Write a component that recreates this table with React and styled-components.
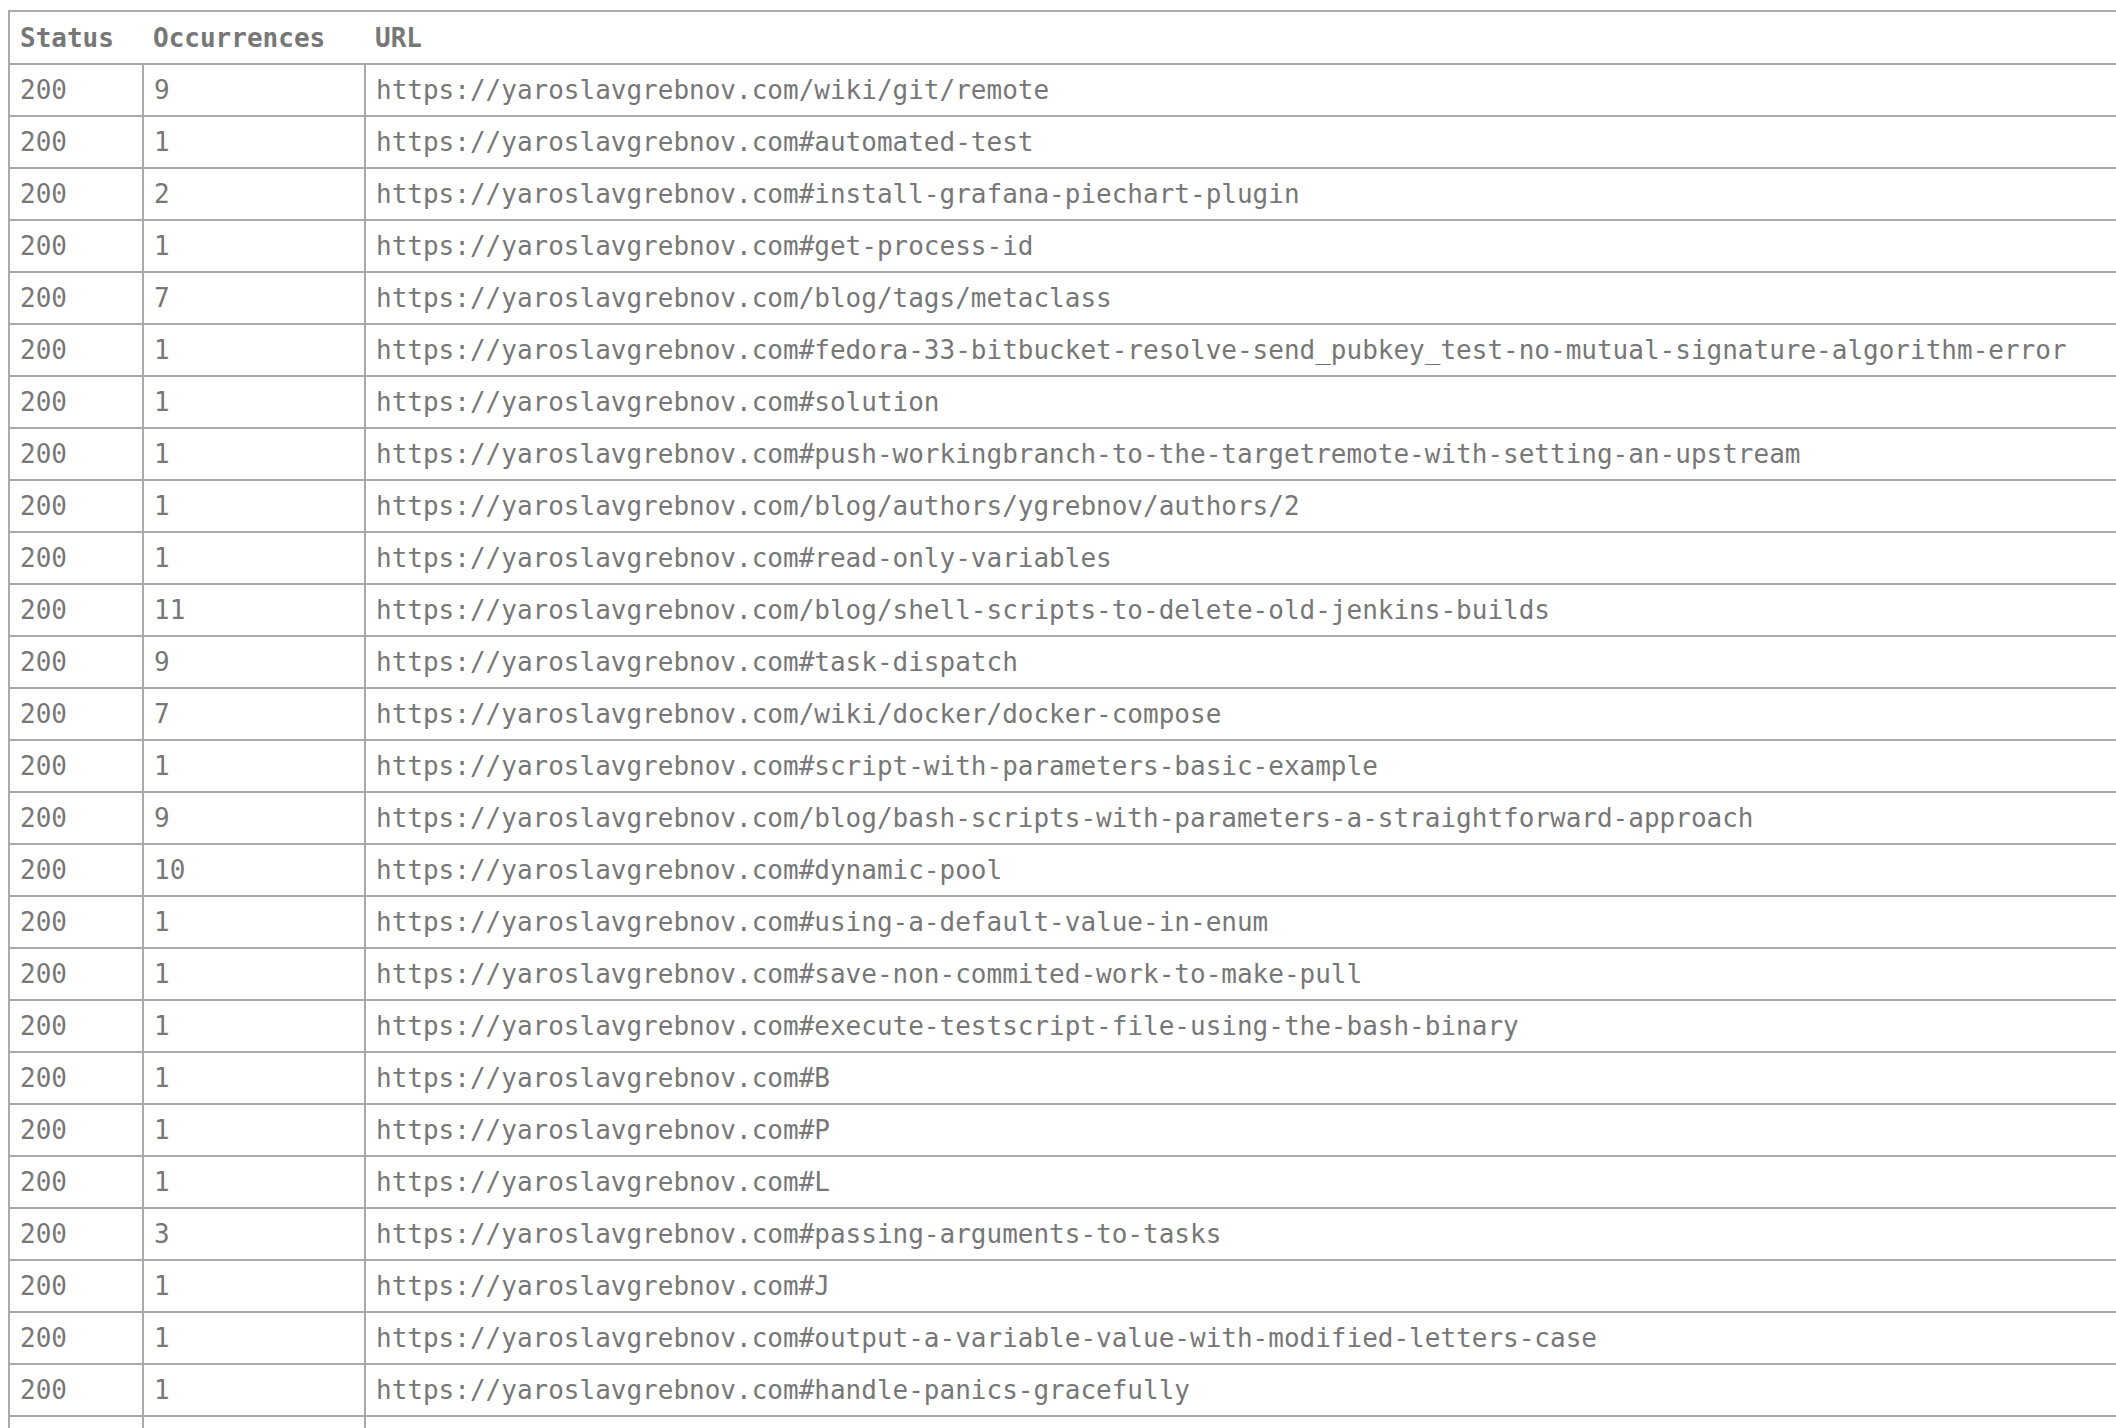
import styled, { createGlobalStyle } from "styled-components";

const rows = [
  ["200", "9", "https://yaroslavgrebnov.com/wiki/git/remote"],
  ["200", "1", "https://yaroslavgrebnov.com#automated-test"],
  ["200", "2", "https://yaroslavgrebnov.com#install-grafana-piechart-plugin"],
  ["200", "1", "https://yaroslavgrebnov.com#get-process-id"],
  ["200", "7", "https://yaroslavgrebnov.com/blog/tags/metaclass"],
  ["200", "1", "https://yaroslavgrebnov.com#fedora-33-bitbucket-resolve-send_pubkey_test-no-mutual-signature-algorithm-error"],
  ["200", "1", "https://yaroslavgrebnov.com#solution"],
  ["200", "1", "https://yaroslavgrebnov.com#push-workingbranch-to-the-targetremote-with-setting-an-upstream"],
  ["200", "1", "https://yaroslavgrebnov.com/blog/authors/ygrebnov/authors/2"],
  ["200", "1", "https://yaroslavgrebnov.com#read-only-variables"],
  ["200", "11", "https://yaroslavgrebnov.com/blog/shell-scripts-to-delete-old-jenkins-builds"],
  ["200", "9", "https://yaroslavgrebnov.com#task-dispatch"],
  ["200", "7", "https://yaroslavgrebnov.com/wiki/docker/docker-compose"],
  ["200", "1", "https://yaroslavgrebnov.com#script-with-parameters-basic-example"],
  ["200", "9", "https://yaroslavgrebnov.com/blog/bash-scripts-with-parameters-a-straightforward-approach"],
  ["200", "10", "https://yaroslavgrebnov.com#dynamic-pool"],
  ["200", "1", "https://yaroslavgrebnov.com#using-a-default-value-in-enum"],
  ["200", "1", "https://yaroslavgrebnov.com#save-non-commited-work-to-make-pull"],
  ["200", "1", "https://yaroslavgrebnov.com#execute-testscript-file-using-the-bash-binary"],
  ["200", "1", "https://yaroslavgrebnov.com#B"],
  ["200", "1", "https://yaroslavgrebnov.com#P"],
  ["200", "1", "https://yaroslavgrebnov.com#L"],
  ["200", "3", "https://yaroslavgrebnov.com#passing-arguments-to-tasks"],
  ["200", "1", "https://yaroslavgrebnov.com#J"],
  ["200", "1", "https://yaroslavgrebnov.com#output-a-variable-value-with-modified-letters-case"],
  ["200", "1", "https://yaroslavgrebnov.com#handle-panics-gracefully"],
  // next row only shows its borders at the bottom edge
  ["", "", ""],
];

const GlobalStyle = createGlobalStyle`
  html, body {
    margin: 0;
    overflow: hidden;
    background: #ffffff;
  }
  body {
    padding: 10px 0 0 8px;
  }
`;

const Table = styled.table`
  border-collapse: collapse;
  width: 2300px;
  table-layout: fixed;
  font-family: "DejaVu Sans Mono", "Liberation Mono", monospace;
  font-size: 26px;
  color: #777777;
`;

const HeadRow = styled.tr`
  height: 53px;
  border: 2px solid #aaaaaa;
`;

const HeadCell = styled.th`
  text-align: left;
  font-weight: bold;
  padding: 0 9px 0 10px;
  width: ${(p) => p.$width || "auto"};
  vertical-align: middle;
`;

const Row = styled.tr`
  height: 52px;
`;

const Cell = styled.td`
  border: 2px solid #aaaaaa;
  padding: 0 9px 0 10px;
  vertical-align: middle;
  white-space: nowrap;
`;

export default function App() {
  return (
    <>
      <GlobalStyle />
      <Table>
        <thead>
          <HeadRow>
            <HeadCell $width="114px">Status</HeadCell>
            <HeadCell $width="203px">Occurrences</HeadCell>
            <HeadCell>URL</HeadCell>
          </HeadRow>
        </thead>
        <tbody>
          {rows.map(([status, count, url], i) => (
            <Row key={i}>
              <Cell>{status}</Cell>
              <Cell>{count}</Cell>
              <Cell>{url}</Cell>
            </Row>
          ))}
        </tbody>
      </Table>
    </>
  );
}
